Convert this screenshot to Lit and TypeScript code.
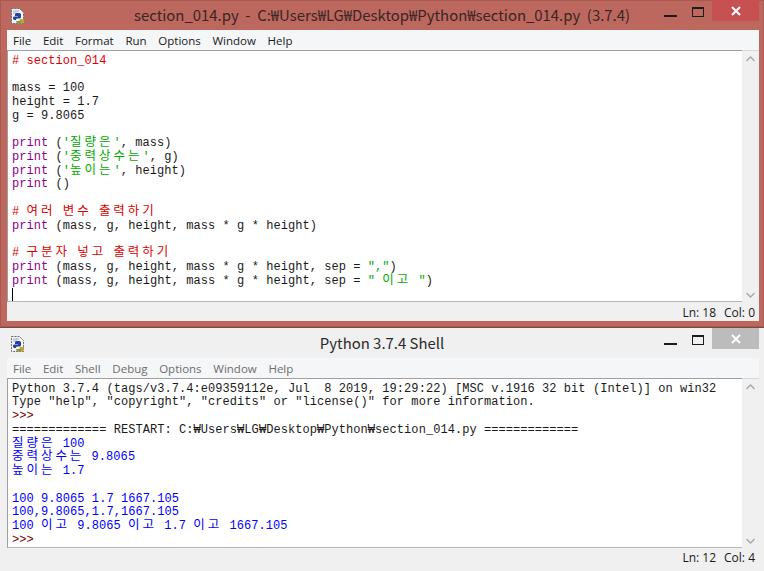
import { LitElement, html, css, svg } from "lit";
import { customElement, property } from "lit/decorators.js";

type Seg = [string, string];
type Line = Seg[];

const split = (t: string, cls: string): Seg[] =>
  t.split(/([\uAC00-\uD7A3]+)/).filter(Boolean).map((p) => [p, /[\uAC00-\uD7A3]/.test(p) ? cls + " ko" : cls] as Seg);

const pr = (rest: Seg[]): Line => [["print", "kw"], ...rest];
const args = "(mass, g, height, mass * g * height";

const editorLines: Line[] = [
  split("# section_014", "cm"),
  [],
  [["mass = 100", ""]],
  [["height = 1.7", ""]],
  [["g = 9.8065", ""]],
  [],
  pr([[" (", ""], ...split("'질량은'", "st"), [", mass)", ""]]),
  pr([[" (", ""], ...split("'중력상수는'", "st"), [", g)", ""]]),
  pr([[" (", ""], ...split("'높이는'", "st"), [", height)", ""]]),
  pr([[" ()", ""]]),
  [],
  split("# 여러 변수 출력하기", "cm"),
  pr([[" " + args + ")", ""]]),
  [],
  split("# 구분자 넣고 출력하기", "cm"),
  pr([[" " + args + ", sep = ", ""], ['","', "st"], [")", ""]]),
  pr([[" " + args + ", sep = ", ""], ...split('" 이고 "', "st"), [")", ""]]),
];

const shellLines: Line[] = [
  [["Python 3.7.4 (tags/v3.7.4:e09359112e, Jul  8 2019, 19:29:22) [MSC v.1916 32 bit (Intel)] on win32", ""]],
  [['Type "help", "copyright", "credits" or "license()" for more information.', ""]],
  [[">>>", "pm"]],
  [["============= RESTART: C:₩Users₩LG₩Desktop₩Python₩section_014.py =============", ""]],
  split("질량은 100", "out"),
  split("중력상수는 9.8065", "out"),
  split("높이는 1.7", "out"),
  [],
  [["100 9.8065 1.7 1667.105", "out"]],
  [["100,9.8065,1.7,1667.105", "out"]],
  split("100 이고 9.8065 이고 1.7 이고 1667.105", "out"),
  [[">>>", "pm"]],
];

const appIcon = svg`
  <path d="M1.500 .5h8l4 4v11h-12z" fill="#f4f4f4" stroke="#6b6b6b" stroke-dasharray="2 1"/>
  <path d="M3 3h6M3 5h4" stroke="#9aa4c4" stroke-width="1"/>
  <path d="M5 9V6.500C5 5.500 6 5 8 5s3 .5 3 1.500V9c0 1-1 1.500-2 1.500H7.500C6.500 10.500 6 11 6 12H4.500C3.500 12 3 11 3 10s.5-1.500 1.500-1.500H8V8H5z" fill="#27409c"/>
  <path d="M9.500 15v-2.500c0-1 .5-1.500 1.500-1.500h1.500c1 0 1.500-.5 1.500-1.500V13c0 1.500-1 2.500-2.500 2.500z" fill="#b9a72e"/>
  <path d="M6 13h5v2.500H7z" fill="#8f9440"/>
`;

@customElement("idle-window")
class IdleWindow extends LitElement {
  @property() heading = "";
  @property({ type: Boolean }) active = false;
  @property({ type: Array }) menus: string[] = [];
  @property({ type: Array }) lines: Line[] = [];
  @property() status = "";
  @property({ type: Boolean }) caret = false;

  static styles = css`
    :host { display: block; }
    .win {
      height: 100%;
      box-sizing: border-box;
      display: flex;
      flex-direction: column;
      background: #f0f0f0;
      font-family: "Open Sans", "Noto Sans", sans-serif;
    }
    .win.active {
      background: #bc685f;
      box-shadow: inset 0 0 0 1px #a9594f;
      border-bottom: 1px solid #7d4a44;
    }
    .title {
      height: 30px;
      flex: none;
      display: flex;
      position: relative;
      align-items: center;
      justify-content: center;
      font-family: "Noto Sans CJK KR", "Noto Sans", sans-serif;
      font-size: 14.9px;
      color: #2b2b2b;
    }
    .active .title { color: #3a2523; }
    .icon { position: absolute; left: 10px; top: 8px; width: 16px; height: 16px; }
    .heading { position: relative; top: -1px; white-space: pre; }
    .controls { position: absolute; left: 664px; top: 0; width: 95px; height: 21px; display: flex; }
    .min { width: 13px; margin-top: 15px; height: 2px; background: #1c1c1c; }
    .max {
      margin: 7px 0 0 15px;
      width: 10px;
      height: 7px;
      border: 1px solid #1c1c1c;
      border-top-width: 2px;
    }
    .close {
      margin: 0 0 0 8px;
      width: 47px;
      height: 21px;
      background: #bcbcbc;
      display: flex;
      align-items: center;
      justify-content: center;
    }
    .active .close { background: #c75050; }
    .close svg { width: 10px; height: 10px; }
    .client {
      flex: 1;
      min-height: 0;
      margin: 0 5px 5px 7px;
      background: #f0f0f0;
      display: flex;
      flex-direction: column;
    }
    .active .client { margin-bottom: 6px; }
    .menu {
      height: 20px;
      flex: none;
      background: #f5f6f7;
      display: flex;
      align-items: center;
      gap: 11.7px;
      padding-left: 6px;
      font-size: 11.5px;
      color: #1a1a1a;
    }
    .inactive .menu { color: #6d6d6d; }
    .body { flex: 1; min-height: 0; display: flex; }
    .text {
      flex: 1;
      min-width: 0;
      background: #fff;
      border-top: 1px solid #a0a0a0;
      border-left: 1px solid #a0a0a0;
      border-bottom: 1px solid #b8b8b8;
      padding: 3.5px 0 0 4px;
      overflow: hidden;
      font-family: "Liberation Mono", monospace;
      font-size: 12px;
      letter-spacing: 0.06px;
      line-height: 13.75px;
      color: #1a1a1a;
    }
    .line { height: 13.75px; white-space: pre; }
    .kw { color: #900090; }
    .cm { color: #dd0000; }
    .st { color: #00aa00; }
    .out { color: #0000ff; }
    .pm { color: #770000; }
    .ko { font-family: "Noto Sans CJK KR", sans-serif; font-size: 12.5px; letter-spacing: 2.96px; line-height: 0; }
    .cursor { display: inline-block; width: 1px; height: 14px; background: #000; vertical-align: top; }
    .scroll {
      width: 17px;
      flex: none;
      border-top: 1px solid #d8d8d8;
      background: #f0f0f0;
      display: flex;
      flex-direction: column;
      justify-content: space-between;
      align-items: center;
      padding: 5px 0 4px;
    }
    .scroll svg { width: 9px; height: 6px; display: block; }
    .status {
      height: 18px;
      box-sizing: border-box;
      padding: 1px 4px 0 0;
      flex: none;
      display: flex;
      align-items: center;
      justify-content: flex-end;
      gap: 8px;
      font-size: 12px;
      color: #1a1a1a;
      white-space: pre;
    }
    .active .status { height: 19px; }
  `;

  render() {
    return html`
      <div class="win ${this.active ? "active" : "inactive"}">
        <div class="title">
          <svg class="icon" viewBox="0 0 16 16">${appIcon}</svg>
          <span class="heading">${this.heading}</span>
          <div class="controls">
            <div class="min"></div>
            <div class="max"></div>
            <div class="close">
              <svg viewBox="0 0 10 10"><path d="M1 1l8 8M9 1l-8 8" stroke="#fff" stroke-width="2"/></svg>
            </div>
          </div>
        </div>
        <div class="client">
          <div class="menu">${this.menus.map((m) => html`<span>${m}</span>`)}</div>
          <div class="body">
            <div class="text">
              ${this.lines.map(
                (l) => html`<div class="line">${l.map(([t, c]) => html`<span class=${c}>${t}</span>`)}</div>`
              )}
              ${this.caret ? html`<div class="line"><span class="cursor"></span></div>` : ""}
            </div>
            <div class="scroll">
              <svg viewBox="0 0 9 6"><path d="M.5 5l4-4 4 4" fill="none" stroke="#a6a6a6" stroke-width="1.300"/></svg>
              <svg viewBox="0 0 9 6"><path d="M.5 1l4 4 4-4" fill="none" stroke="#a6a6a6" stroke-width="1.300"/></svg>
            </div>
          </div>
          <div class="status">${this.status.split("|").map((s) => html`<span>${s}</span>`)}</div>
        </div>
      </div>
    `;
  }
}

@customElement("app-root")
export class AppRoot extends LitElement {
  static styles = css`
    :host { display: block; width: 764px; height: 571px; overflow: hidden; background: #f0f0f0; }
    .desk { display: grid; grid-template-rows: 328px 243px; height: 571px; }
  `;
  render() {
    return html`
      <div class="desk">
        <idle-window
          active
          caret
          heading="section_014.py  -  C:₩Users₩LG₩Desktop₩Python₩section_014.py  (3.7.4)"
          .menus=${["File", "Edit", "Format", "Run", "Options", "Window", "Help"]}
          .lines=${editorLines}
          status="Ln: 18|Col: 0"
        ></idle-window>
        <idle-window
          heading="Python 3.7.4 Shell"
          .menus=${["File", "Edit", "Shell", "Debug", "Options", "Window", "Help"]}
          .lines=${shellLines}
          status="Ln: 12|Col: 4"
        ></idle-window>
      </div>
    `;
  }
}
void IdleWindow;
